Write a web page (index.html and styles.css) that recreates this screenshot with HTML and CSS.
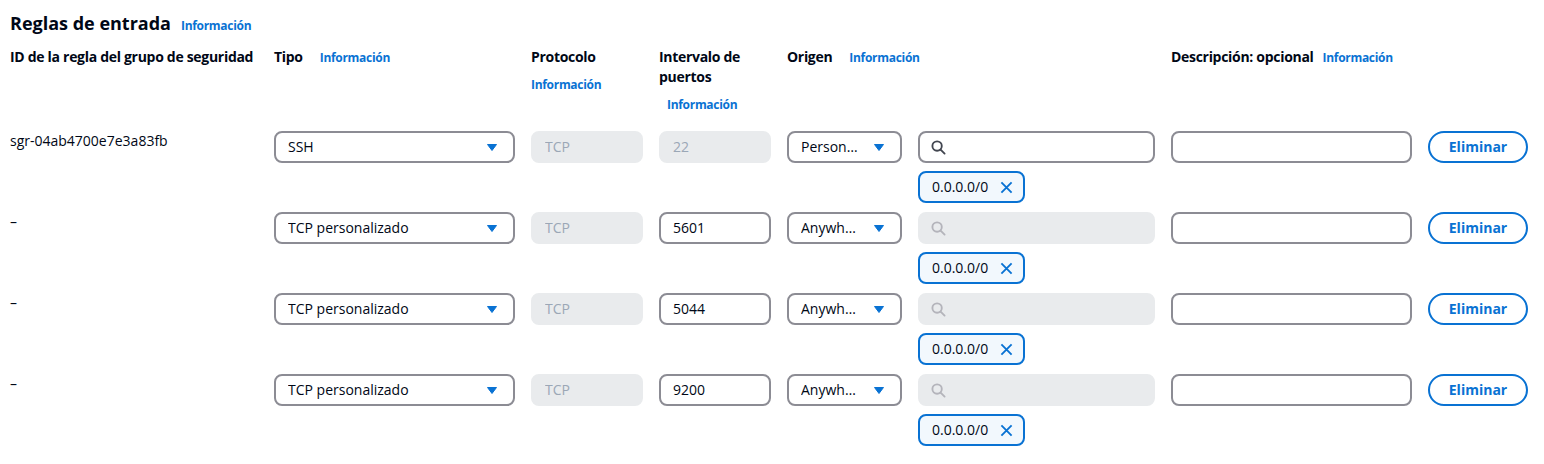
FILE: index.html
```html
<!DOCTYPE html>
<html lang="es">
<head>
<meta charset="utf-8">
<title>Reglas de entrada</title>
<link rel="stylesheet" href="styles.css">
</head>
<body>
<div class="panel">
  <div class="title-row">
    <h2 class="title">Reglas de entrada</h2>
    <a class="info" href="#">Información</a>
  </div>

  <div class="cols head">
    <div class="hcell"><span class="hlabel nowrap">ID de la regla del grupo de seguridad</span></div>
    <div class="hcell inline"><span class="hlabel">Tipo</span><a class="info wide" href="#">Información</a></div>
    <div class="hcell stack"><span class="hlabel">Protocolo</span><a class="info" href="#">Información</a></div>
    <div class="hcell stack"><span class="hlabel">Intervalo de puertos</span><a class="info indent" href="#">Información</a></div>
    <div class="hcell inline span2"><span class="hlabel">Origen</span><a class="info wide" href="#">Información</a></div>
    <div class="hcell inline"><span class="hlabel">Descripción: opcional</span><a class="info" href="#">Información</a></div>
    <div class="hcell"></div>
  </div>

  <div class="rows">
    <!-- Row 1 -->
    <div class="cols rule">
      <div class="id-cell">sgr-04ab4700e7e3a83fb</div>
      <div class="field select"><span class="val">SSH</span><svg class="caret" viewBox="0 0 10 7"><path d="M0.5 0.5h9L5 6.5z"/></svg></div>
      <div class="field disabled"><span class="val">TCP</span></div>
      <div class="field disabled"><span class="val">22</span></div>
      <div class="field select"><span class="val">Person…</span><svg class="caret" viewBox="0 0 10 7"><path d="M0.5 0.5h9L5 6.5z"/></svg></div>
      <div class="src">
        <div class="field search"><svg class="mag" viewBox="0 0 16 16"><circle cx="6.5" cy="6.5" r="5"/><path d="M10.2 10.2l4.3 4.3"/></svg></div>
        <div class="token"><span>0.0.0.0/0</span><svg class="x" viewBox="0 0 14 14"><path d="M1.5 1.5l11 11M12.5 1.5l-11 11"/></svg></div>
      </div>
      <div class="field"></div>
      <button class="btn">Eliminar</button>
    </div>

    <!-- Row 2 -->
    <div class="cols rule">
      <div class="id-cell">–</div>
      <div class="field select"><span class="val">TCP personalizado</span><svg class="caret" viewBox="0 0 10 7"><path d="M0.5 0.5h9L5 6.5z"/></svg></div>
      <div class="field disabled"><span class="val">TCP</span></div>
      <div class="field"><span class="val">5601</span></div>
      <div class="field select"><span class="val">Anywh…</span><svg class="caret" viewBox="0 0 10 7"><path d="M0.5 0.5h9L5 6.5z"/></svg></div>
      <div class="src">
        <div class="field search disabled"><svg class="mag" viewBox="0 0 16 16"><circle cx="6.5" cy="6.5" r="5"/><path d="M10.2 10.2l4.3 4.3"/></svg></div>
        <div class="token"><span>0.0.0.0/0</span><svg class="x" viewBox="0 0 14 14"><path d="M1.5 1.5l11 11M12.5 1.5l-11 11"/></svg></div>
      </div>
      <div class="field"></div>
      <button class="btn">Eliminar</button>
    </div>

    <!-- Row 3 -->
    <div class="cols rule">
      <div class="id-cell">–</div>
      <div class="field select"><span class="val">TCP personalizado</span><svg class="caret" viewBox="0 0 10 7"><path d="M0.5 0.5h9L5 6.5z"/></svg></div>
      <div class="field disabled"><span class="val">TCP</span></div>
      <div class="field"><span class="val">5044</span></div>
      <div class="field select"><span class="val">Anywh…</span><svg class="caret" viewBox="0 0 10 7"><path d="M0.5 0.5h9L5 6.5z"/></svg></div>
      <div class="src">
        <div class="field search disabled"><svg class="mag" viewBox="0 0 16 16"><circle cx="6.5" cy="6.5" r="5"/><path d="M10.2 10.2l4.3 4.3"/></svg></div>
        <div class="token"><span>0.0.0.0/0</span><svg class="x" viewBox="0 0 14 14"><path d="M1.5 1.5l11 11M12.5 1.5l-11 11"/></svg></div>
      </div>
      <div class="field"></div>
      <button class="btn">Eliminar</button>
    </div>

    <!-- Row 4 -->
    <div class="cols rule">
      <div class="id-cell">–</div>
      <div class="field select"><span class="val">TCP personalizado</span><svg class="caret" viewBox="0 0 10 7"><path d="M0.5 0.5h9L5 6.5z"/></svg></div>
      <div class="field disabled"><span class="val">TCP</span></div>
      <div class="field"><span class="val">9200</span></div>
      <div class="field select"><span class="val">Anywh…</span><svg class="caret" viewBox="0 0 10 7"><path d="M0.5 0.5h9L5 6.5z"/></svg></div>
      <div class="src">
        <div class="field search disabled"><svg class="mag" viewBox="0 0 16 16"><circle cx="6.5" cy="6.5" r="5"/><path d="M10.2 10.2l4.3 4.3"/></svg></div>
        <div class="token"><span>0.0.0.0/0</span><svg class="x" viewBox="0 0 14 14"><path d="M1.5 1.5l11 11M12.5 1.5l-11 11"/></svg></div>
      </div>
      <div class="field"></div>
      <button class="btn">Eliminar</button>
    </div>
  </div>
</div>
</body>
</html>
```

FILE: styles.css
```css
* { box-sizing: border-box; }

body {
  margin: 0;
  background: #ffffff;
  color: #000716;
  font-family: "Open Sans", "Noto Sans", sans-serif;
  font-size: 14px;
  line-height: 20px;
}

.panel {
  padding: 12px 10px;
}

.title-row {
  display: flex;
  align-items: baseline;
  gap: 10px;
  height: 22px;
}

.title {
  margin: 0;
  font-size: 18px;
  line-height: 22px;
  font-weight: 700;
}

.info {
  color: #0972d3;
  font-size: 12px;
  font-weight: 700;
  letter-spacing: -0.3px;
  text-decoration: none;
}

.cols {
  display: grid;
  grid-template-columns: 248px 241px 112px 112px 115px 237px 241px 100px;
  column-gap: 16px;
}

.head {
  margin-top: 13px;
  align-items: start;
}

.hlabel {
  font-weight: 700;
  letter-spacing: -0.3px;
}

.nowrap {
  white-space: nowrap;
}

.hcell.inline .info {
  margin-left: 9px;
}

.hcell.inline .info.wide {
  margin-left: 17px;
}

.hcell.stack .hlabel {
  display: block;
}

.hcell.stack .info {
  display: block;
  margin-top: 8px;
  line-height: 20px;
}

.hcell.stack .info.indent {
  margin-left: 8px;
}

.span2 {
  grid-column: span 2;
}

.rows {
  margin-top: 16px;
  display: flex;
  flex-direction: column;
  gap: 9px;
}

.rule {
  align-items: start;
}

.id-cell {
  line-height: 20px;
}

.field {
  height: 32px;
  border: 2px solid #8c8c94;
  border-radius: 8px;
  background: #ffffff;
  padding: 0 16px 0 12px;
  display: flex;
  align-items: center;
  min-width: 0;
}

.val {
  flex: 1;
  white-space: nowrap;
  overflow: hidden;
}

.field.disabled {
  background: #e9ebed;
  border-color: #e9ebed;
  color: #9ba7b6;
}

.caret {
  width: 10px;
  height: 7px;
  flex: none;
  fill: #0972d3;
  stroke: #0972d3;
  stroke-width: 1;
  stroke-linejoin: round;
}

.src {
  display: flex;
  flex-direction: column;
  align-items: flex-start;
  gap: 8px;
}

.src .field {
  width: 100%;
  padding-left: 11px;
}

.mag {
  width: 15px;
  height: 15px;
  fill: none;
  stroke: #424650;
  stroke-width: 2;
  stroke-linecap: round;
}

.field.disabled .mag {
  stroke: #b4b4bb;
}

.token {
  height: 32px;
  width: 107px;
  border: 2px solid #0972d3;
  border-radius: 8px;
  background: #f2f8fd;
  display: flex;
  align-items: center;
  justify-content: space-between;
  padding: 0 10px 0 12px;
  white-space: nowrap;
}

.x {
  width: 13px;
  height: 13px;
  fill: none;
  stroke: #0972d3;
  stroke-width: 2;
}

.btn {
  height: 32px;
  width: 100px;
  border: 2px solid #0972d3;
  border-radius: 20px;
  background: #ffffff;
  color: #0972d3;
  font-family: inherit;
  font-size: 14px;
  font-weight: 700;
  line-height: 20px;
  padding: 0;
  cursor: pointer;
}
```
